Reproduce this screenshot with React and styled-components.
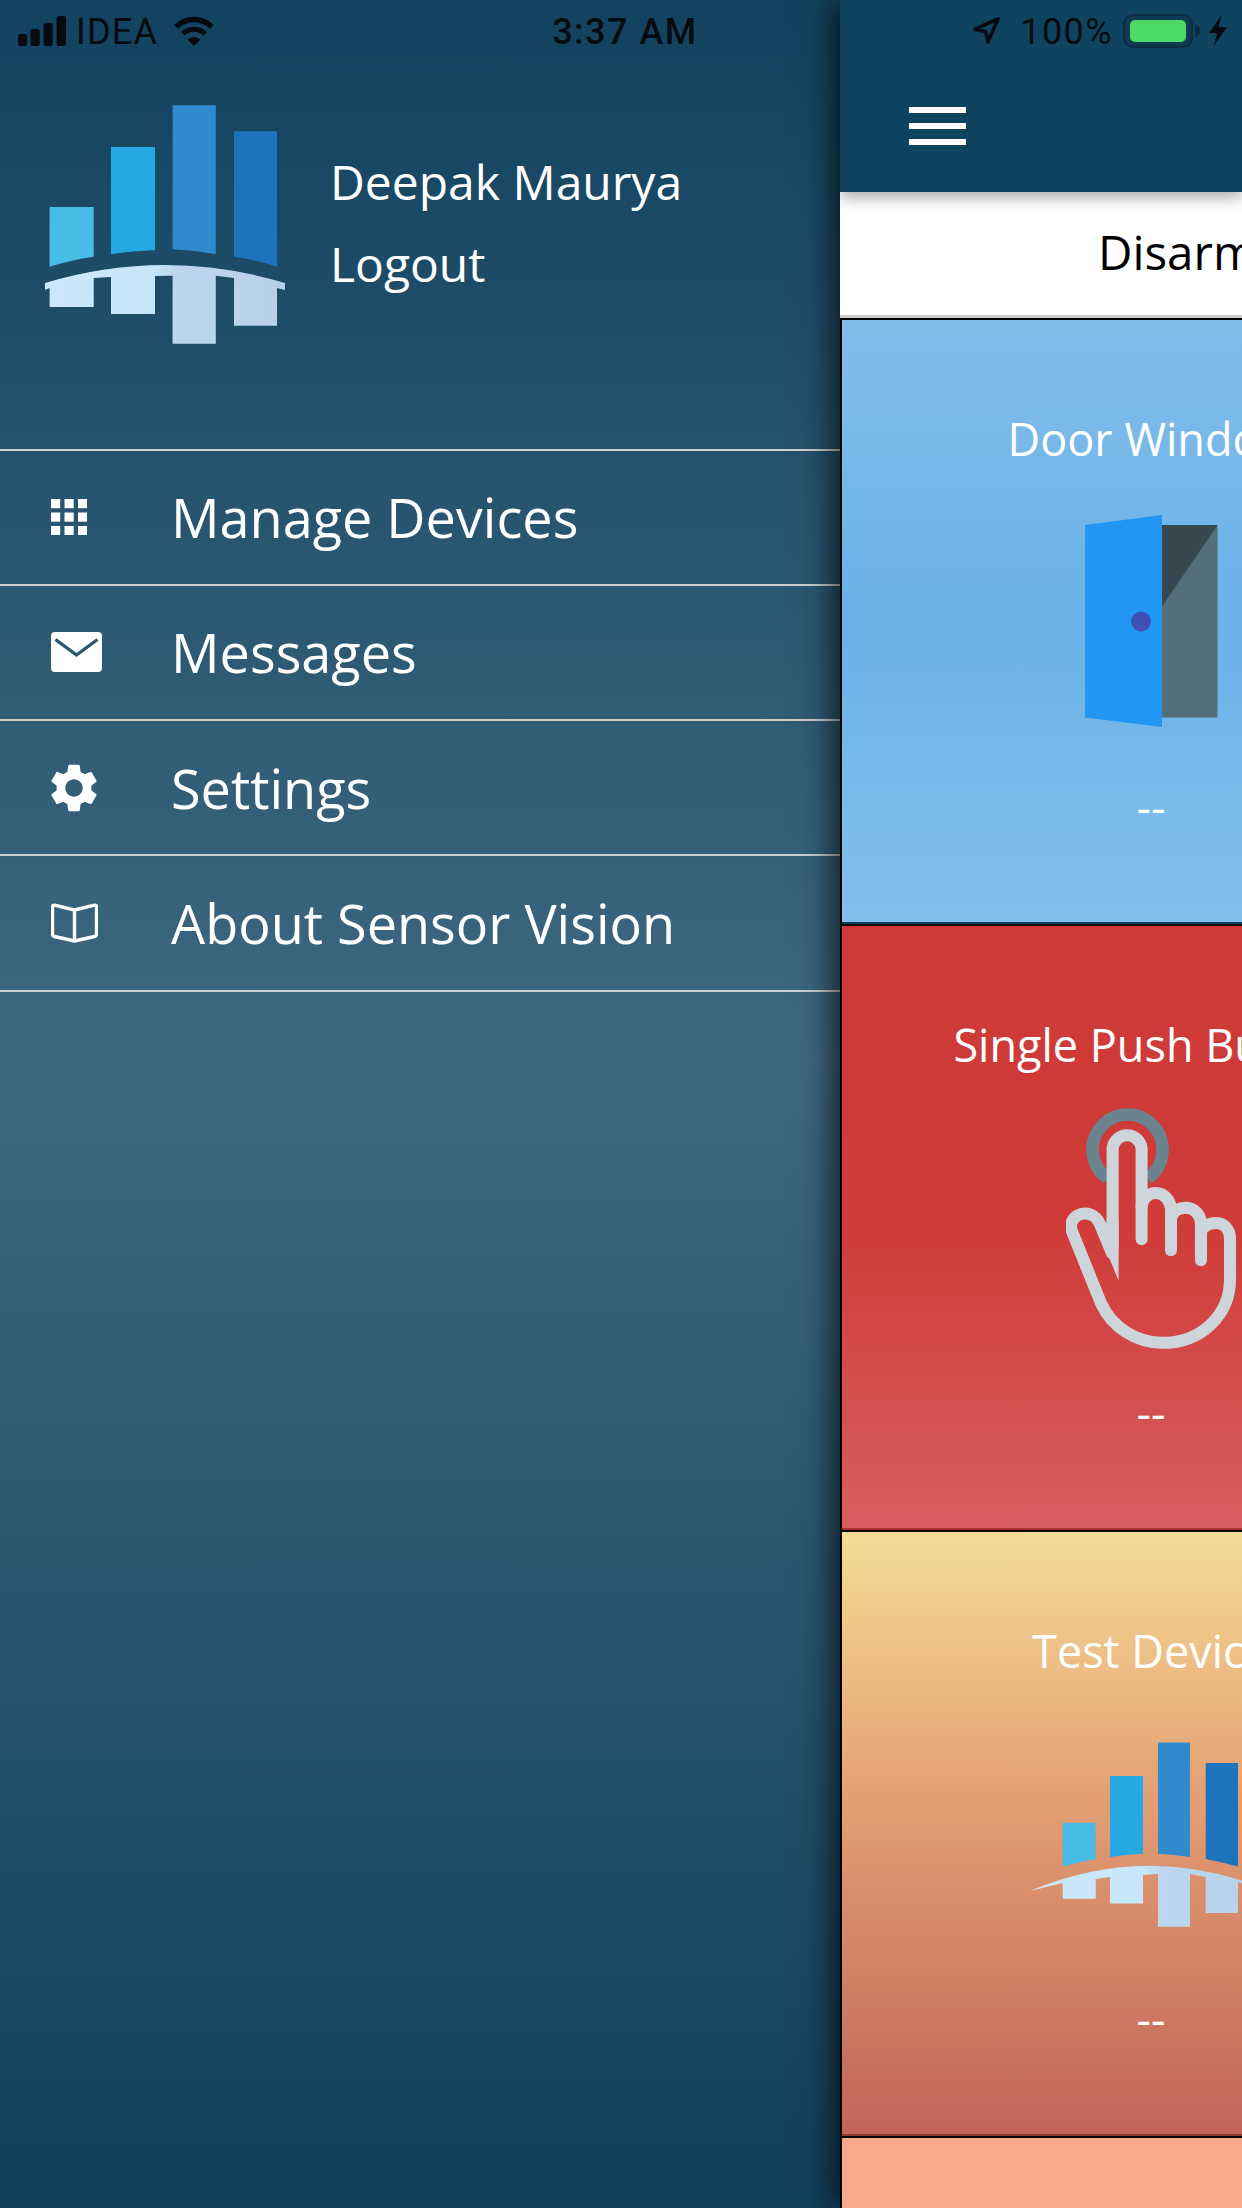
import React from "react";
import styled, { createGlobalStyle } from "styled-components";
import { MdSettings } from "react-icons/md";

const Global = createGlobalStyle`
  html, body { margin: 0; padding: 0; }
  body { width: 1242px; height: 2208px; overflow: hidden; font-family: "Open Sans", "Noto Sans", sans-serif; }
  * { box-sizing: border-box; }
`;

const Screen = styled.div`
  position: relative;
  display: flex;
  width: 1242px;
  height: 2208px;
  overflow: hidden;
`;

/* ---- status bar ---- */
const StatusBar = styled.div`
  position: absolute;
  z-index: 5;
  top: 0;
  left: 0;
  width: 1242px;
  height: 61px;
  padding: 0 15px 0 18px;
  display: grid;
  grid-template-columns: 1fr auto 1fr;
  align-items: center;
  color: #050b10;
  font-family: Roboto, "Liberation Sans", sans-serif;
  font-size: 36px;
`;
const StatusLeft = styled.div`
  display: flex;
  align-items: center;
`;
const Carrier = styled.span`
  margin: 2px 15px 0 10px;
  letter-spacing: 1.2px;
`;
const Clock = styled.span`
  margin: 2px 0 0 5px;
  font-weight: 500;
  letter-spacing: 1.5px;
`;
const StatusRight = styled.div`
  display: flex;
  align-items: center;
  justify-content: flex-end;
`;
const Percent = styled.span`
  margin: 2px 10px 0 20px;
  letter-spacing: 1.4px;
`;
const Battery = styled.div`
  position: relative;
  width: 70px;
  height: 34px;
  padding: 4px 5px;
  border: 2px solid #0b2c42;
  background: #0f3a53;
  border-radius: 10px;
  margin-right: 16px;
  &::after {
    content: "";
    position: absolute;
    right: -9px;
    top: 9px;
    width: 5px;
    height: 12px;
    border-radius: 0 5px 5px 0;
    background: #0b2c42;
  }
`;
const BatteryFill = styled.div`
  height: 100%;
  border-radius: 5px;
  background: #4cd964;
`;

/* ---- drawer ---- */
const Drawer = styled.aside`
  flex: 0 0 840px;
  height: 2208px;
  background: linear-gradient(180deg, #12425f 0%, #3e6880 48%, #113f5c 100%);
  color: #fff;
`;
const Profile = styled.div`
  height: 448.5px;
  padding: 105px 0 0 45px;
  display: flex;
  gap: 45px;
`;
const ProfileText = styled.div`
  margin-top: 36px;
  font-size: 48px;
  line-height: 82px;
`;
const Menu = styled.nav`
  border-top: 2px solid #cfcfcf;
`;
const MenuItem = styled.div`
  height: 135.3px;
  border-bottom: 2px solid #cfcfcf;
  padding-left: 51px;
  display: flex;
  align-items: center;
  font-size: 54px;
`;
const MenuIcon = styled.span`
  flex: 0 0 120px;
  display: flex;
  align-items: center;
`;

/* ---- main ---- */
const Main = styled.main`
  position: relative;
  flex: 0 0 402px;
  height: 2208px;
  overflow: hidden;
  box-shadow: -6px 0 32px rgba(0, 0, 0, 0.75);
  background: #fff;
`;
const Header = styled.div`
  position: relative;
  z-index: 2;
  height: 192px;
  padding: 107px 0 0 69px;
  background: #10435f;
  box-shadow: 0 6px 14px rgba(0, 0, 0, 0.32);
`;
const Burger = styled.div`
  display: flex;
  flex-direction: column;
  gap: 9.5px;
  width: 57px;
`;
const BurgerLine = styled.span`
  height: 6.3px;
  background: #fff;
`;
const ModeBar = styled.div`
  position: relative;
  width: 402px;
  height: 128px;
  padding: 0 0 9px 258px;
  display: flex;
  align-items: center;
  background: #fff;
  color: #000;
  font-size: 47.5px;
  white-space: nowrap;
  box-shadow: inset 0 -2px 0 #000;
  &::after {
    content: "";
    position: absolute;
    left: 0;
    right: 0;
    bottom: 2px;
    height: 3px;
    background: #cccccc;
  }
`;
const Card = styled.section`
  width: 622px;
  height: ${(p) => p.$h}px;
  padding-top: 89px;
  border-left: 2px solid #000;
  border-right: 2px solid #000;
  border-bottom: 2px solid #000;
  background: ${(p) => p.$bg};
  box-shadow: inset 0 -2px 0 ${(p) => p.$edge};
  color: #fff;
  display: flex;
  flex-direction: column;
  align-items: center;
  font-size: 45px;
  line-height: 60px;
  white-space: nowrap;
`;
const CardTitle = styled.div`
  height: 60px;
`;
const IconSlot = styled.div`
  height: 241px;
  margin-top: 33px;
  display: flex;
  align-items: center;
  justify-content: center;
`;
const CardValue = styled.div`
  margin-top: 34px;
`;

const BrandLogo = () => (
  <svg width="240" height="239" viewBox="0 0 240 239">
    <defs>
      <linearGradient id="lowA" x1="0" x2="1" y1="0" y2="0">
        <stop offset="0" stopColor="#cce8fb" />
        <stop offset="0.45" stopColor="#c6e7fa" />
        <stop offset="0.55" stopColor="#bbd6ee" />
        <stop offset="1" stopColor="#b6d1e9" />
      </linearGradient>
    </defs>
    <path d="M4.6 102H48.7V151.7Q26 155 4.6 161.7Z" fill="#49bce6" />
    <path d="M66 42H110V145Q88 146 66 149Z" fill="#25a9e4" />
    <path d="M127.6 .3H170.8V149Q150 145.5 127.6 144.3Z" fill="#2f8bcd" />
    <path d="M189 26.3H232V161.7Q212 155 189 151.7Z" fill="#1e73bd" />
    <path
      d="M0 178Q120 142 240 178V185L232 183V220.7H189V173L170.8 170.7V238.7H127.6V170.7L110 171V209H66V172L48.7 173V202H4.6V183L0 185Z"
      fill="url(#lowA)"
    />
  </svg>
);

const DeviceLogo = () => (
  <svg width="240" height="185" viewBox="1 0 240 185">
    <defs>
      <linearGradient id="lowB" x1="0" x2="1" y1="0" y2="0">
        <stop offset="0" stopColor="#cce8fb" />
        <stop offset="0.47" stopColor="#c6e7fa" />
        <stop offset="0.55" stopColor="#bbd6ee" />
        <stop offset="1" stopColor="#b6d1e9" />
      </linearGradient>
    </defs>
    <path d="M32.7 80.8H65.7V116.9Q48 120 32.7 124.6Z" fill="#49bce6" />
    <path d="M80 34H113V111.8Q96 112.5 80 115Z" fill="#25a9e4" />
    <path d="M128 .5H160V115Q144 112.5 128 111.8Z" fill="#2f8bcd" />
    <path d="M175.7 21H208V124.6Q192 120 175.7 116.9Z" fill="#1e73bd" />
    <path
      d="M0 149Q120 98.6 240 149L208 140V171H175.7V135L160 132V184.7H128V132L113 133V161.4H80V135L65.7 137V156.8H32.7V141Z"
      fill="url(#lowB)"
    />
  </svg>
);

const DoorIcon = () => (
  <svg width="133" height="215" viewBox="0 0 133 215">
    <path d="M77 10H132.5V202.5H77Z" fill="#546e7a" />
    <path d="M77 10H132.5L77 91.6Z" fill="#37474f" />
    <path d="M0 10L77 0V212L0 202.5Z" fill="#2196f3" />
    <circle cx="56" cy="106.4" r="10" fill="#3f51b5" />
  </svg>
);

const HandIcon = () => (
  <svg width="170" height="241" viewBox="0 0.75 170 241">
    <path d="M41.6 71A35 35 0 1 1 81.6 71" fill="none" stroke="#6a838f" strokeWidth="12.5" />
    <g fill="none" stroke="#cdd5da" strokeWidth="12" strokeLinecap="round" strokeLinejoin="round">
      <path d="M75.6 132V41A14.6 14.6 0 0 0 46.6 41V140" />
      <path d="M46 146L34 117C30 107 20 104 12 108C5 112 4 119 6 124L35 196C46 220 70 235.6 96.6 235.6C135 235.6 164 208 164 172V131C164 122 158 115.8 150 115.8C142 115.8 136 120 135 125" />
      <path d="M105 112C106 105 112 100.6 120 100.6C128 100.6 135 107 135 118V153" />
      <path d="M75.6 100C75.6 92 82 85.8 90 85.8C98 85.8 105 93 105 104V143" />
    </g>
    <path d="M41 110H52.6V173.6L38 138Z" fill="#cdd5da" />
  </svg>
);

const SignalIcon = () => (
  <svg width="48" height="30" viewBox="0 0 48 30" fill="currentColor">
    <rect x="0" y="18" width="9.2" height="12" rx="2.5" />
    <rect x="12.6" y="13" width="9.2" height="17" rx="2.5" />
    <rect x="25.6" y="6.7" width="9.2" height="23.3" rx="2.5" />
    <rect x="38.6" y="0" width="9.4" height="30" rx="2.5" />
  </svg>
);
const WifiIcon = () => (
  <svg width="42" height="30" viewBox="0 0 42 30">
    <path d="M3.2 10.8A25.2 25.2 0 0 1 38.8 10.8" fill="none" stroke="currentColor" strokeWidth="5.6" />
    <path d="M9.8 17.9A15.8 15.8 0 0 1 32.2 17.9" fill="none" stroke="currentColor" strokeWidth="5.2" />
    <path d="M21 30L14.6 23.6A9 9 0 0 1 27.4 23.6Z" fill="currentColor" />
  </svg>
);
const ArrowIcon = () => (
  <svg width="27" height="27" viewBox="0 0 27 27">
    <path d="M25 2L2 12.2L12.6 14.4L15 25Z" fill="none" stroke="currentColor" strokeWidth="3.6" strokeLinejoin="round" />
  </svg>
);
const BoltIcon = () => (
  <svg width="18" height="31" viewBox="0 0 18 31" fill="currentColor">
    <path d="M12.5 0L0 18H8L5 31L18 12H9.5Z" />
  </svg>
);

const GridIcon = () => (
  <svg width="36" height="36" viewBox="0 0 36 36" fill="#fff">
    {[0, 13.5, 27].map((x) =>
      [0, 13.5, 27].map((y) => <rect key={`${x}-${y}`} x={x} y={y} width="9.2" height="9.2" />)
    )}
  </svg>
);
const MailIcon = () => (
  <svg width="51" height="40" viewBox="0 0 51 40">
    <rect width="51" height="40" rx="4" fill="#fff" />
    <path d="M4.5 7.5L25.5 23L46.5 7.5" fill="none" stroke="#2a5872" strokeWidth="3.4" />
  </svg>
);
const BookIcon = () => (
  <svg width="47" height="40" viewBox="0 0 47 40">
    <path
      d="M23.5 7L3.5 2.2Q1.5 2 1.5 4V31Q1.5 33 3.5 33.5L23.5 38L43.5 33.5Q45.5 33 45.5 31V4Q45.5 2 43.5 2.2L23.5 7V38"
      fill="none"
      stroke="#fff"
      strokeWidth="3.4"
      strokeLinejoin="round"
    />
  </svg>
);
const GearIcon = styled(MdSettings)`
  margin-left: -6px;
  color: #fff;
`;

const menu = [
  { label: "Manage Devices", icon: <GridIcon /> },
  { label: "Messages", icon: <MailIcon /> },
  { label: "Settings", icon: <GearIcon size={58} /> },
  { label: "About Sensor Vision", icon: <BookIcon /> },
];

const cards = [
  {
    title: "Door Window",
    icon: <DoorIcon />,
    edge: "#0d3e5c",
    bg: "linear-gradient(180deg, #82bdea 0%, #6ab2e8 50%, #84bfec 100%)",
  },
  {
    title: "Single Push Button",
    icon: <HandIcon />,
    edge: "#a92f2f",
    bg: "linear-gradient(180deg, #ce3a38 0%, #cf3b39 50%, #d85f60 100%)",
  },
  {
    title: "Test Device",
    icon: <DeviceLogo />,
    edge: "#8f3a30",
    bg: "linear-gradient(180deg, #f5dc96 0%, #e39e72 45%, #c1645a 100%)",
  },
];

export default function App() {
  return (
    <Screen>
      <Global />
      <StatusBar>
        <StatusLeft>
          <SignalIcon />
          <Carrier>IDEA</Carrier>
          <WifiIcon />
        </StatusLeft>
        <Clock>3:37 AM</Clock>
        <StatusRight>
          <ArrowIcon />
          <Percent>100%</Percent>
          <Battery>
            <BatteryFill />
          </Battery>
          <BoltIcon />
        </StatusRight>
      </StatusBar>

      <Drawer>
        <Profile>
          <BrandLogo />
          <ProfileText>
            <div>Deepak Maurya</div>
            <div>Logout</div>
          </ProfileText>
        </Profile>
        <Menu>
          {menu.map((m) => (
            <MenuItem key={m.label}>
              <MenuIcon>{m.icon}</MenuIcon>
              {m.label}
            </MenuItem>
          ))}
        </Menu>
      </Drawer>

      <Main>
        <Header>
          <Burger>
            <BurgerLine />
            <BurgerLine />
            <BurgerLine />
          </Burger>
        </Header>
        <ModeBar>Disarm</ModeBar>
        {cards.map((c) => (
          <Card key={c.title} $h={606} $edge={c.edge} $bg={c.bg}>
            <CardTitle>{c.title}</CardTitle>
            <IconSlot>{c.icon}</IconSlot>
            <CardValue>--</CardValue>
          </Card>
        ))}
        <Card $h={70} $edge="#f8a98c" $bg="#f8a98c" />
      </Main>
    </Screen>
  );
}
